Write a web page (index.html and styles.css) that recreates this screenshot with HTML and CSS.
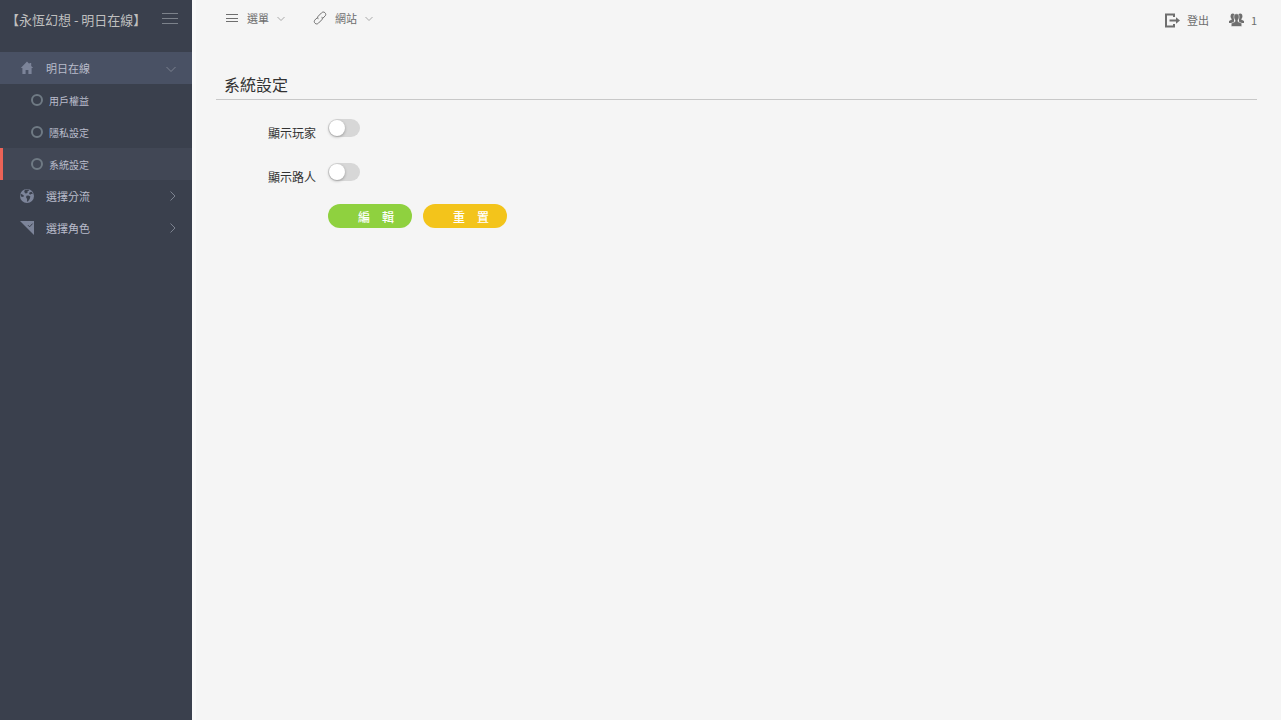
FILE: index.html
```html
<!DOCTYPE html>
<html lang="zh-Hant">

<head>
    <meta charset="UTF-8">
    <meta name="viewport" content="width=device-width, initial-scale=1.0">
    <title>系統設定</title>
    <link rel="stylesheet" href="styles.css">
</head>

<body>
    <aside class="sidebar">
        <div class="brand">
            <a class="brand-name" href="#">【永恆幻想 - 明日在線】</a>
            <button class="menu-toggle" type="button" aria-label="Menu">
                <svg width="16" height="12" viewBox="0 0 16 12" fill="none" stroke="currentColor"><path d="M0 .5h16M0 5.5h16M0 10.5h16"></path></svg>
            </button>
        </div>
        <nav class="menu">
            <a class="menu-item open" href="#">
                <svg class="menu-icon" width="14" height="14" viewBox="0 0 14 14" fill="currentColor"><path d="M7 .5L.8 7h1.600V13h3.200V9h2.800v4h3.200V7h1.600L11.200 4.900V2H9.400v1.100z"></path></svg>
                <span>明日在線</span>
                <svg class="arrow" width="10" height="10" viewBox="0 0 10 10" fill="none" stroke="currentColor"><path d="M.5 4L5 8.500 9.500 4"></path></svg>
            </a>
            <div class="submenu">
                <a class="submenu-item" href="#"><i class="ring"></i>用戶權益</a>
                <a class="submenu-item" href="#"><i class="ring"></i>隱私設定</a>
                <a class="submenu-item active" href="#"><i class="ring"></i>系統設定</a>
            </div>
            <a class="menu-item" href="#">
                <svg class="menu-icon" width="14" height="14" viewBox="0 0 14 14">
                    <circle cx="7" cy="7" r="7" fill="currentColor"></circle>
                    <path class="land" d="M5 .8L8.500.4l.6 1.200-1.600.6.2 1.200-1.500 1L5 4.200 4.200 2.600zM9.400 3.400l2.200-.6 1.300 2-1.800.2-1 .8-1-1zM6.400 6.800l2-.4 2 1.200-.6 2.200-2 3-.9-.5.200-2.200-1-1.500zM.6 4.800l1.800.8 1.600 1.200-.8 1.200-2.400-.6z"></path>
                </svg>
                <span>選擇分流</span>
                <svg class="arrow" width="10" height="10" viewBox="0 0 10 10" fill="none" stroke="currentColor"><path d="M4.500 .5L9 5 4.500 9.500"></path></svg>
            </a>
            <a class="menu-item" href="#">
                <svg class="menu-icon" width="14" height="14" viewBox="0 0 14 14">
                    <path d="M0 0h14v14z" fill="currentColor"></path>
                    <path class="tick" d="M8 4.200l1.600 1.600 3-3.200"></path>
                </svg>
                <span>選擇角色</span>
                <svg class="arrow" width="10" height="10" viewBox="0 0 10 10" fill="none" stroke="currentColor"><path d="M4.500 .5L9 5 4.500 9.500"></path></svg>
            </a>
        </nav>
    </aside>

    <div class="page">
        <header class="topbar">
            <nav class="topbar-nav">
                <a class="top-link" href="#">
                    <svg width="14" height="14" viewBox="0 0 14 14" fill="none" stroke="currentColor"><path d="M1 3.500h12M1 7.500h12M1 10.500h12"></path></svg>
                    <span>選單</span>
                    <svg class="caret" width="8" height="8" viewBox="0 0 8 8" fill="none" stroke="currentColor"><path d="M.5 3L4 6.500 7.500 3"></path></svg>
                </a>
                <a class="top-link" href="#">
                    <svg width="14" height="14" viewBox="0 0 14 14" fill="none" stroke="currentColor" stroke-linecap="round">
                        <path d="M5 7.800c-.6-.9-.5-1.900.3-2.700L8.600 1.800c1-1 2.400-1 3.400 0s1 2.300 0 3.300L9.800 7.300"></path>
                        <path d="M9 6.200c.6.9.5 1.900-.3 2.700l-3.300 3.300c-1 1-2.400 1-3.400 0s-1-2.300 0-3.300L4.200 6.700"></path>
                    </svg>
                    <span>網站</span>
                    <svg class="caret" width="8" height="8" viewBox="0 0 8 8" fill="none" stroke="currentColor"><path d="M.5 3L4 6.500 7.500 3"></path></svg>
                </a>
            </nav>
            <div class="topbar-user">
                <a class="user-link" href="#">
                    <svg width="15" height="15" viewBox="0 0 15 15" fill="none" stroke="currentColor" stroke-width="2">
                        <path d="M9 4V1.500H1v12h8V11"></path>
                        <path d="M4.500 7.500h7"></path>
                        <path d="M11 4.200l4 3.300-4 3.300z" fill="currentColor" stroke="none"></path>
                    </svg>
                    <span>登出</span>
                </a>
                <a class="user-link" href="#">
                    <svg width="15" height="14" viewBox="0 0 15 14" fill="currentColor">
                        <ellipse cx="3.800" cy="3.200" rx="2.200" ry="2.800"></ellipse>
                        <ellipse cx="11.200" cy="3.200" rx="2.200" ry="2.800"></ellipse>
                        <path d="M0 10V8l2.800-1.600V5H5v5zM15 10V8l-2.800-1.600V5H10v5z"></path>
                        <path class="front" d="M7.500.8C9.400.8 10.300 2.200 10.100 4.200c-.1 1.300-.5 2.300-1.100 2.900v1.500l3.800 1.700v3.200H2.200v-3.200L6 8.600V7.100C5.400 6.500 5 5.500 4.900 4.200 4.700 2.200 5.600.8 7.500.8z"></path>
                    </svg>
                    <span>1</span>
                </a>
            </div>
        </header>

        <main class="content">
            <h1 class="page-title">系統設定</h1>
            <form class="settings">
                <div class="field">
                    <label for="show-players">顯示玩家</label>
                    <input class="switch" type="checkbox" id="show-players">
                </div>
                <div class="field">
                    <label for="show-passers">顯示路人</label>
                    <input class="switch" type="checkbox" id="show-passers">
                </div>
                <div class="actions">
                    <button class="btn btn-edit" type="submit">編　輯</button>
                    <button class="btn btn-reset" type="reset">重　置</button>
                </div>
            </form>
        </main>
    </div>
</body>

</html>
```
FILE: styles.css
```css
* {
    margin: 0;
    padding: 0;
    box-sizing: border-box;
}

body {
    display: flex;
    min-height: 100vh;
    background-color: #f5f5f5;
    color: #333;
    font-family: "Noto Sans CJK TC", sans-serif;
    font-size: 12px;
}

a {
    color: inherit;
    text-decoration: none;
}

svg {
    display: block;
    flex: none;
}

button,
input {
    font: inherit;
}

/* Sidebar */
.sidebar {
    flex: none;
    width: 192px;
    background-color: #3a404d;
    color: #aeb2b7;
}

.brand {
    display: flex;
    align-items: center;
    justify-content: space-between;
    height: 52px;
    padding: 0 14px 14px 6px;
}

.brand-name {
    font-size: 13px;
    color: #bfbfbf;
}

.menu-toggle {
    border: none;
    background: none;
    color: #7c828b;
    cursor: pointer;
}

.menu-item {
    display: flex;
    align-items: center;
    height: 32px;
    padding: 0 16px 0 20px;
    font-size: 11px;
    color: #b9bccb;
}

.menu-item.open {
    background-color: #495164;
}

.menu-icon {
    margin-right: 12px;
    color: #7c8499;
}

.land {
    fill: #3a404d;
}

.tick {
    fill: none;
    stroke: #3a404d;
}

.arrow {
    margin-left: auto;
    color: #7c828f;
}

.submenu-item {
    display: flex;
    align-items: center;
    gap: 6px;
    height: 32px;
    padding-left: 28px;
    border-left: 3px solid transparent;
    font-size: 10px;
    color: #b9bccb;
}

.submenu-item.active {
    border-left-color: #eb6357;
    background-color: #414755;
}

.ring {
    width: 12px;
    height: 12px;
    border: 2px solid #6f7a84;
    border-radius: 50%;
}

/* Page */
.page {
    flex: 1;
    min-width: 0;
    border-left: 4px solid #f9f9f9;
}

.topbar {
    display: flex;
    justify-content: space-between;
    height: 40px;
    padding: 0 24px 0 29px;
    font-size: 11px;
    color: #6e6e6e;
}

.topbar-nav,
.topbar-user {
    display: flex;
}

.topbar-nav {
    gap: 28px;
    height: 36px;
}

.topbar-user {
    gap: 20px;
}

.top-link {
    display: flex;
    align-items: center;
    gap: 8px;
}

.caret {
    color: #a8a8a8;
}

.user-link {
    display: flex;
    align-items: center;
    gap: 7px;
}

.front {
    stroke: #f5f5f5;
    stroke-width: 0.6;
}

.content {
    padding: 30px 24px 24px 20px;
}

.page-title {
    padding: 0 8px;
    border-bottom: 1px solid #c8c8c8;
    font-size: 16px;
    font-weight: 400;
    line-height: 29px;
}

.settings {
    padding-top: 16px;
}

.field {
    display: flex;
    gap: 12px;
    height: 44px;
}

.field label {
    width: 100px;
    padding-top: 5px;
    line-height: 24px;
    text-align: right;
}

.switch {
    appearance: none;
    width: 32px;
    height: 18px;
    margin-top: 3px;
    border-radius: 9px;
    background-color: #d7d7d7;
    cursor: pointer;
}

.switch::before {
    content: "";
    display: block;
    width: 16px;
    height: 16px;
    margin: 1px;
    border-radius: 50%;
    background-color: #fff;
    box-shadow: 0 1px 3px rgba(0, 0, 0, 0.3);
}

.switch:checked {
    background-color: #8fd13f;
}

.switch:checked::before {
    margin-left: 15px;
}

.actions {
    display: flex;
    gap: 11px;
    padding-left: 112px;
}

.btn {
    height: 24px;
    padding: 0 18px 0 30px;
    border: none;
    border-radius: 12px;
    color: #fff;
    font-weight: 500;
    cursor: pointer;
}

.btn-edit {
    background-color: #8fd13f;
}

.btn-reset {
    background-color: #f3c41b;
}
```
